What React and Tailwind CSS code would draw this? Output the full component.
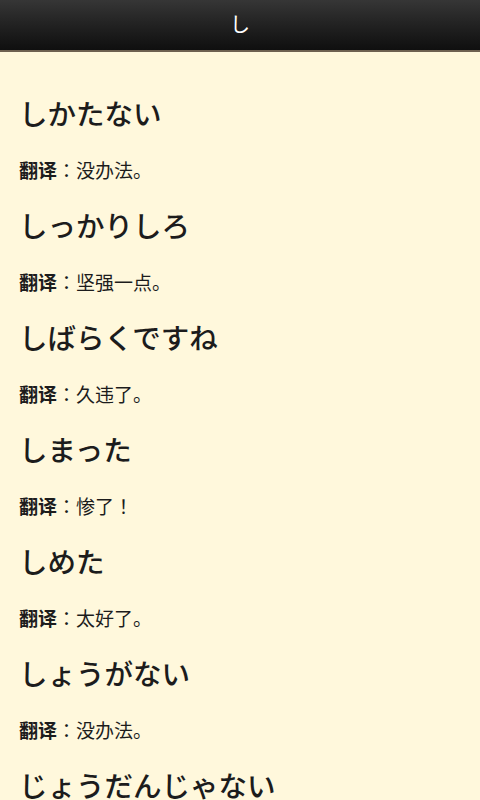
import React from 'react';

const phrases = [
  { jp: 'しかたない', cn: '没办法。' },
  { jp: 'しっかりしろ', cn: '坚强一点。' },
  { jp: 'しばらくですね', cn: '久违了。' },
  { jp: 'しまった', cn: '惨了！' },
  { jp: 'しめた', cn: '太好了。' },
  { jp: 'しょうがない', cn: '没办法。' },
  { jp: 'じょうだんじゃない', cn: '开玩笑。' },
];

export default function App() {
  return (
    <div className="w-[480px] h-[800px] overflow-hidden bg-[#fff8dc] flex flex-col">
      {/* Title bar */}
      <div className="h-[52px] shrink-0 flex items-center justify-center bg-gradient-to-b from-[#363636] to-[#0f0f0f] border-b-2 border-[#6e6150]">
        <span
          className="text-white text-[20px] leading-none -mt-[2px]"
          style={{ fontFamily: '"Noto Sans CJK JP", sans-serif' }}
        >
          し
        </span>
      </div>

      {/* Phrase list */}
      <div className="flex flex-col pt-[41px] px-[19px] text-[#1c1c1c]">
        {phrases.map((p) => (
          <div key={p.jp} className="flex flex-col pb-[21px]">
            <h2
              className="h-[40px] leading-[40px] text-[28.5px] font-medium whitespace-nowrap"
              style={{ fontFamily: '"Noto Sans CJK JP", sans-serif' }}
            >
              {p.jp}
            </h2>
            <p
              className="mt-[23px] h-[28px] leading-[28px] text-[19px] whitespace-nowrap"
              style={{ fontFamily: '"Noto Sans CJK JP", sans-serif' }}
            >
              <span className="font-bold">翻译</span>：{p.cn}
            </p>
          </div>
        ))}
      </div>
    </div>
  );
}
